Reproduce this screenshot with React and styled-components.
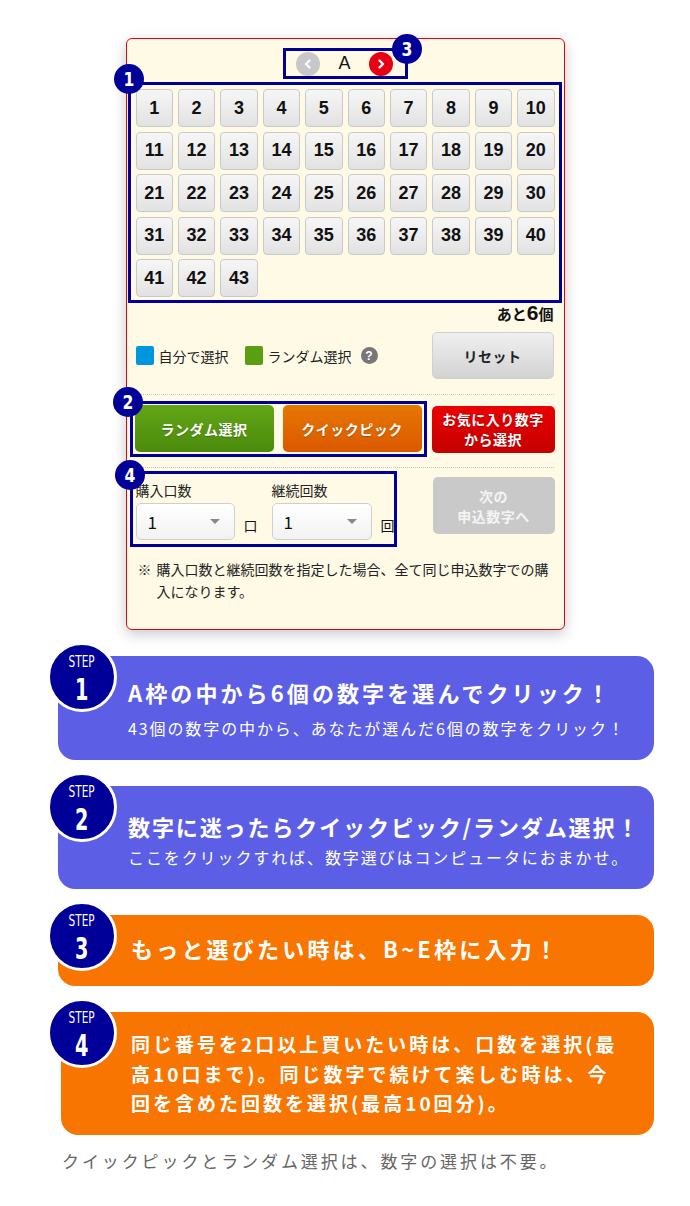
import React from 'react';
import styled, { createGlobalStyle } from 'styled-components';

const GlobalStyle = createGlobalStyle`
  body {
    margin: 0;
    background: #fff;
    font-family: "Noto Sans CJK JP", "Noto Sans", sans-serif;
    color: #222;
  }
`;

const Page = styled.div`
  width: 690px;
  padding-top: 38px;
`;

const Card = styled.div`
  box-sizing: border-box;
  width: 439px;
  margin: 0 auto;
  padding: 9px 0 27px;
  border: 1px solid #e60012;
  border-radius: 6px;
  background: #fffae6;
  box-shadow: 0 4px 14px rgba(0, 0, 0, 0.22);
`;

const Framed = styled.div`
  position: relative;
  box-sizing: border-box;
  border: 3px solid #000099;
`;

const Badge = styled.span`
  position: absolute;
  left: ${(p) => p.$x}px;
  top: ${(p) => p.$y}px;
  width: 30px;
  height: 30px;
  border-radius: 50%;
  background: #000099;
  color: #fff;
  display: flex;
  align-items: center;
  justify-content: center;
  font-family: "DejaVu Sans", sans-serif;
  font-weight: bold;
  font-size: 20px;
  z-index: 2;
  span {
    display: inline-block;
    transform: scaleX(0.78);
  }
`;

const TabRow = styled.div`
  display: flex;
  justify-content: center;
`;

const TabBox = styled(Framed)`
  width: 125px;
  height: 31px;
  display: flex;
  align-items: center;
  justify-content: space-between;
  padding: 0 11px 0 10px;
`;

const TabArrow = styled.span`
  width: 24px;
  height: 24px;
  border-radius: 50%;
  background: ${(p) => (p.$active ? '#e60012' : '#c8c8c8')};
  display: flex;
  align-items: center;
  justify-content: center;
`;

const TabLabel = styled.span`
  font-family: "Liberation Sans", sans-serif;
  font-size: 18px;
  color: #111;
`;

const GridBox = styled(Framed)`
  margin: 3px 2px 0 1px;
  padding: 4px 4px 3px 5px;
  display: grid;
  grid-template-columns: repeat(10, 1fr);
  column-gap: 5px;
  row-gap: 4.6px;
`;

const NumButton = styled.div`
  box-sizing: border-box;
  height: 38px;
  border: 1px solid #c9c9c9;
  border-radius: 4px;
  background: linear-gradient(#f6f6f6, #e2e2e2);
  display: flex;
  align-items: center;
  justify-content: center;
  font-family: "Liberation Sans", sans-serif;
  font-weight: bold;
  font-size: 18px;
  color: #111;
`;

const Remain = styled.div`
  margin-top: 1px;
  padding-right: 10px;
  text-align: right;
  font-weight: bold;
  font-size: 15px;
  line-height: 18px;
  color: #111;
  b {
    font-family: "Liberation Sans", sans-serif;
    font-size: 21px;
  }
`;

const ControlRow = styled.div`
  display: flex;
  align-items: center;
  justify-content: space-between;
  margin-top: 9px;
  padding: 0 10px 0 9px;
`;

const Legend = styled.div`
  display: flex;
  align-items: center;
  font-size: 14px;
  color: #222;
`;

const Swatch = styled.span`
  width: 18px;
  height: 19px;
  border-radius: 2px;
  background: ${(p) => p.$color};
  margin-right: 5px;
  margin-left: ${(p) => p.$gap || 0}px;
`;

const Help = styled.span`
  width: 17px;
  height: 17px;
  margin-left: 9px;
  border-radius: 50%;
  background: #777;
  color: #fff;
  font-family: "Liberation Sans", sans-serif;
  font-weight: bold;
  font-size: 12px;
  display: flex;
  align-items: center;
  justify-content: center;
`;

const Button = styled.div`
  box-sizing: border-box;
  width: ${(p) => p.$w || 123}px;
  height: ${(p) => p.$h || 47}px;
  margin-top: ${(p) => p.$top || 0}px;
  border-radius: 5px;
  display: flex;
  align-items: center;
  justify-content: center;
  text-align: center;
  font-weight: bold;
  font-size: 14px;
  line-height: 20px;
  letter-spacing: 0.5px;
  color: ${(p) => p.$color || '#fff'};
  background: ${(p) => p.$bg};
  border: ${(p) => p.$border || 'none'};
  text-shadow: ${(p) => (p.$shadow ? '0 1px 1px rgba(0,0,0,0.25)' : 'none')};
`;

const Divider = styled.div`
  margin: ${(p) => p.$top}px 10px 0 9px;
  border-top: 1px dotted #c4c4c4;
`;

const ActionRow = styled.div`
  display: flex;
  align-items: ${(p) => p.$align || 'center'};
  justify-content: space-between;
  margin-top: ${(p) => p.$top}px;
  padding: 0 9px 0 3px;
`;

const QuickBox = styled(Framed)`
  width: 297px;
  height: 56px;
  padding: 1px 2px 2px;
  display: flex;
  gap: 9px;
  > div {
    flex: 1;
  }
`;

const OptionBox = styled(Framed)`
  width: 267px;
  height: 76px;
  padding: 7px 0 0 3px;
  display: grid;
  grid-template-columns: 122px auto;
  column-gap: 14px;
`;

const Field = styled.div`
  display: flex;
  flex-direction: column;
`;

const FieldLabel = styled.div`
  font-size: 14px;
  line-height: 18px;
  color: #222;
`;

const FieldRow = styled.div`
  display: flex;
  align-items: center;
  gap: 9px;
  margin-top: 4px;
`;

const Select = styled.div`
  box-sizing: border-box;
  width: 100px;
  height: 37px;
  border: 1px solid #cfcfcf;
  border-radius: 5px;
  background: linear-gradient(#fff, #f2f2f2);
  display: flex;
  align-items: center;
  justify-content: space-between;
  padding: 0 14px 0 11px;
  font-size: 17px;
  color: #111;
  &::after {
    content: '';
    border-left: 5px solid transparent;
    border-right: 5px solid transparent;
    border-top: 5px solid #888;
  }
`;

const Unit = styled.span`
  font-size: 14px;
  padding-top: 6px;
  color: #111;
`;

const Note = styled.p`
  margin: 11px 0 0;
  padding: 0 4px 0 30px;
  text-indent: -19px;
  font-size: 14px;
  line-height: 22px;
  letter-spacing: 0;
  color: #222;
  span {
    display: inline-block;
    width: 19px;
    text-indent: 0;
  }
`;

const Steps = styled.div`
  margin-top: 26px;
  padding-left: 58px;
  width: 596px;
`;

const StepItem = styled.div`
  position: relative;
  margin-bottom: 26px;
  margin-left: ${(p) => p.$shift || 0}px;
  box-sizing: border-box;
  width: ${(p) => 596 - (p.$shift || 0)}px;
  padding: ${(p) => p.$pad};
  border-radius: 17px;
  background: ${(p) => p.$bg};
  color: #fff;
`;

const StepCircle = styled.div`
  position: absolute;
  left: -${(p) => 11 + (p.$shift || 0)}px;
  top: -14px;
  box-sizing: border-box;
  width: 70px;
  height: 70px;
  border-radius: 50%;
  border: 3px solid #fff;
  background: #000099;
  display: flex;
  flex-direction: column;
  align-items: center;
  font-family: "DejaVu Sans", sans-serif;
  color: #fff;
  small {
    display: block;
    margin-top: 8px;
    font-size: 15px;
    line-height: 18px;
    transform: scaleX(0.7);
  }
  strong {
    display: block;
    font-size: 31px;
    line-height: 36px;
    transform: scaleX(0.62);
  }
`;

const StepTitle = styled.div`
  font-weight: bold;
  font-size: 22px;
  line-height: 28px;
  letter-spacing: ${(p) => p.$ls || 2}px;
  white-space: nowrap;
`;

const StepSub = styled.div`
  margin-top: ${(p) => p.$top}px;
  font-size: 16px;
  line-height: 24px;
  letter-spacing: 1.9px;
  white-space: nowrap;
`;

const StepBody = styled.div`
  font-weight: bold;
  font-size: 19px;
  line-height: 29.5px;
  letter-spacing: 3px;
  white-space: nowrap;
`;

const Footer = styled.p`
  margin: -12px 0 0 62px;
  font-size: 17px;
  line-height: 24px;
  letter-spacing: 2.9px;
  color: #666;
`;

const Chevron = ({ dir }) => (
  <svg width="12" height="12" viewBox="0 0 12 12">
    <path
      d={dir === 'left' ? 'M7.5 2.5 L4 6 L7.5 9.5' : 'M4.5 2.5 L8 6 L4.5 9.5'}
      fill="none"
      stroke="#fff"
      strokeWidth="2.4"
      strokeLinecap="round"
      strokeLinejoin="round"
    />
  </svg>
);

const Step = ({ no, children, ...rest }) => (
  <StepItem {...rest}>
    <StepCircle $shift={rest.$shift}>
      <small>STEP</small>
      <strong>{no}</strong>
    </StepCircle>
    {children}
  </StepItem>
);

const numbers = Array.from({ length: 43 }, (_, i) => i + 1);

export default function App() {
  return (
    <Page>
      <GlobalStyle />
      <Card>
        <TabRow>
          <TabBox>
            <Badge $x={106} $y={-17}>
              <span>3</span>
            </Badge>
            <TabArrow>
              <Chevron dir="left" />
            </TabArrow>
            <TabLabel>A</TabLabel>
            <TabArrow $active>
              <Chevron dir="right" />
            </TabArrow>
          </TabBox>
        </TabRow>

        <GridBox>
          <Badge $x={-17} $y={-21}>
            <span>1</span>
          </Badge>
          {numbers.map((n) => (
            <NumButton key={n}>{n}</NumButton>
          ))}
        </GridBox>

        <Remain>
          あと<b>6</b>個
        </Remain>

        <ControlRow>
          <Legend>
            <Swatch $color="#0096df" />
            自分で選択
            <Swatch $color="#5a9e12" $gap={16} />
            ランダム選択
            <Help>?</Help>
          </Legend>
          <Button
            $w={122}
            $color="#222"
            $bg="linear-gradient(#f0f0f0, #d2d2d2)"
            $border="1px solid #d0d0d0"
          >
            リセット
          </Button>
        </ControlRow>

        <Divider $top={15} />

        <ActionRow $top={6}>
          <QuickBox>
            <Badge $x={-20} $y={-17}>
              <span>2</span>
            </Badge>
            <Button $shadow $bg="linear-gradient(#62a617, #4b8a0b)">
              ランダム選択
            </Button>
            <Button $shadow $bg="linear-gradient(#e57800, #dc5800)">
              クイックピック
            </Button>
          </QuickBox>
          <Button $shadow $bg="linear-gradient(#ea0000, #c50000)">
            お気に入り数字
            <br />
            から選択
          </Button>
        </ActionRow>

        <Divider $top={10} />

        <ActionRow $top={3} $align="flex-start">
          <OptionBox>
            <Badge $x={-18} $y={-14}>
              <span>4</span>
            </Badge>
            <Field>
              <FieldLabel>購入口数</FieldLabel>
              <FieldRow>
                <Select>1</Select>
                <Unit>口</Unit>
              </FieldRow>
            </Field>
            <Field>
              <FieldLabel>継続回数</FieldLabel>
              <FieldRow>
                <Select>1</Select>
                <Unit>回</Unit>
              </FieldRow>
            </Field>
          </OptionBox>
          <Button $w={122} $h={57} $top={6} $color="#f4f4f4" $bg="#c9c9c9">
            次の
            <br />
            申込数字へ
          </Button>
        </ActionRow>

        <Note>
          <span>※</span>購入口数と継続回数を指定した場合、全て同じ申込数字での購入になります。
        </Note>
      </Card>

      <Steps>
        <Step no="1" $bg="#5c5fe5" $pad="22px 0 20px 70px">
          <StepTitle $ls={3.1}>A枠の中から6個の数字を選んでクリック！</StepTitle>
          <StepSub $top={10}>43個の数字の中から、あなたが選んだ6個の数字をクリック！</StepSub>
        </Step>
        <Step no="2" $bg="#5c5fe5" $pad="26px 0 20px 70px">
          <StepTitle $ls={1.9}>数字に迷ったらクイックピック/ランダム選択！</StepTitle>
          <StepSub $top={5}>ここをクリックすれば、数字選びはコンピュータにおまかせ。</StepSub>
        </Step>
        <Step no="3" $bg="#f77500" $pad="19px 0 24px 73px">
          <StepTitle $ls={3.2}>もっと選びたい時は、B~E枠に入力！</StepTitle>
        </Step>
        <Step no="4" $bg="#f77500" $shift={3} $pad="17px 0 17px 70px">
          <StepBody>
            同じ番号を2口以上買いたい時は、口数を選択(最
            <br />
            高10口まで)。同じ数字で続けて楽しむ時は、今
            <br />
            回を含めた回数を選択(最高10回分)。
          </StepBody>
        </Step>
      </Steps>

      <Footer>クイックピックとランダム選択は、数字の選択は不要。</Footer>
    </Page>
  );
}
